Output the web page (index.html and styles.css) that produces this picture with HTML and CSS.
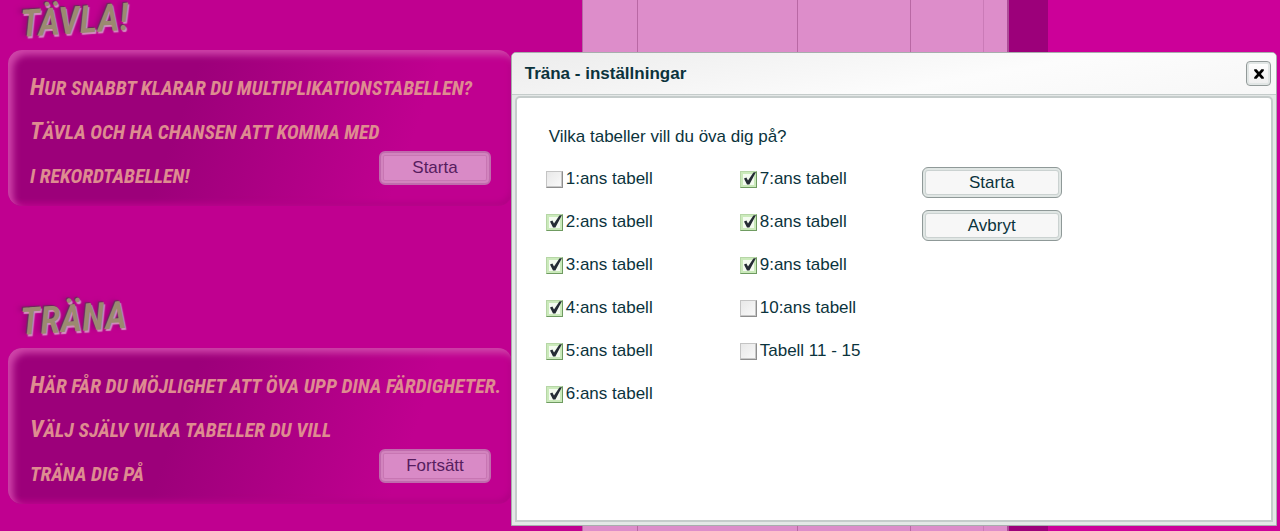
FILE: index.html
```
<!DOCTYPE html>
<html lang="sv">
<head>
    <meta charset="UTF-8">
    <meta name="viewport" content="width=device-width, initial-scale=1.0">
    <title>Träna - inställningar</title>
    <link rel="stylesheet" href="styles.css">
</head>
<body>
    <main class="game">
        <div class="menu">
            <section class="mode">
                <h2>TÄVLA!</h2>
                <div class="panel">
                    <p>Hur snabbt klarar du multiplikationstabellen?</p>
                    <p>Tävla och ha chansen att komma med</p>
                    <p class="plain">i rekordtabellen!</p>
                    <button type="button" class="ghost">Starta</button>
                </div>
            </section>
            <section class="mode">
                <h2>TRÄNA</h2>
                <div class="panel">
                    <p>Här får du möjlighet att öva upp dina färdigheter.</p>
                    <p>Välj själv vilka tabeller du vill</p>
                    <p class="plain">träna dig på</p>
                    <button type="button" class="ghost">Fortsätt</button>
                </div>
            </section>
        </div>
        <div class="board">
            <div></div>
            <div></div>
            <div></div>
            <div></div>
            <div></div>
        </div>
        <div class="shade"></div>
    </main>

    <div class="dialog" role="dialog" aria-labelledby="dialogTitle">
        <div class="titlebar">
            <h1 id="dialogTitle">Träna - inställningar</h1>
            <button type="button" class="close" aria-label="Stäng">
                <svg width="12" height="12" viewBox="0 0 10 10"><path d="M1 1H3L5 3.4L7 1H9V2.2L6.6 5L9 7.8V9H7L5 6.6L3 9H1V7.8L3.4 5L1 2.2Z"/></svg>
            </button>
        </div>
        <form class="content">
            <p>Vilka tabeller vill du öva dig på?</p>
            <div class="columns">
                <div class="list">
                    <label><input type="checkbox">1:ans tabell</label>
                    <label><input type="checkbox" checked>2:ans tabell</label>
                    <label><input type="checkbox" checked>3:ans tabell</label>
                    <label><input type="checkbox" checked>4:ans tabell</label>
                    <label><input type="checkbox" checked>5:ans tabell</label>
                    <label><input type="checkbox" checked>6:ans tabell</label>
                </div>
                <div class="list">
                    <label><input type="checkbox" checked>7:ans tabell</label>
                    <label><input type="checkbox" checked>8:ans tabell</label>
                    <label><input type="checkbox" checked>9:ans tabell</label>
                    <label><input type="checkbox">10:ans tabell</label>
                    <label><input type="checkbox">Tabell 11 - 15</label>
                </div>
                <div class="actions">
                    <button type="button">Starta</button>
                    <button type="button">Avbryt</button>
                </div>
            </div>
        </form>
    </div>
</body>
</html>
```
FILE: styles.css
```
* { box-sizing: border-box; }
body { margin: 0; background: #cc0099; font-family: "Liberation Sans", Arial, sans-serif; font-size: 17px; color: #0b333c; }
h1, h2, p { margin: 0; }
button { font: inherit; color: inherit; padding: 0; cursor: pointer; }

.game { display: grid; grid-template-columns: 45.5% 33.3% 3.1% 1fr; min-height: 100vh; }

/* left menu */
.menu { display: flex; flex-direction: column; gap: 92px; background: #c00090; padding-left: 8px; }
.mode h2 { height: 50px; padding-left: 14px; font-family: "Roboto Condensed", Roboto, sans-serif; font-size: 38px; line-height: 50px; font-style: italic; font-weight: 600; color: #9b8a70; text-shadow: 1px 2px 1px #d48fc0, -1px -1px 1px #6b2a58, -4px -1px 5px #a0007c; transform: rotate(-4deg); transform-origin: left bottom; }
.panel { position: relative; width: 504px; height: 156px; padding: 16px 22px; border-radius: 14px; background: linear-gradient(110deg, #9c007a 35%, #c00090 78%); box-shadow: inset 5px 5px 7px #cf44a9, inset -2px -4px 5px #b30087; }
.panel p { font-family: "Roboto Condensed", Roboto, sans-serif; font-size: 20px; line-height: 44px; font-weight: bold; font-style: italic; text-transform: uppercase; white-space: nowrap; color: #de8c90; }
.panel p::first-letter { font-size: 24px; line-height: 20px; }
.panel .plain::first-letter { font-size: 20px; }
.ghost { position: absolute; right: 21px; bottom: 21px; width: 112px; height: 34px; border: 2px solid #c06bad; border-radius: 6px; background: #d98ac6; box-shadow: inset 0 0 0 2px #d284be, inset 0 0 0 3px #c876b3; color: #571d5f; }

/* score board behind the dialog */
.board { display: grid; grid-template-columns: 55fr 161fr 113fr 73fr 23fr; background: #dd8dca; border-left: 1px solid #b668a4; border-right: 2px solid #ad4c98; }
.board div { border-right: 1px solid #b968a4; }
.board div:nth-child(4) { border-color: #ca7bb7; }
.board div:last-child { border: 0; }
.shade { background: #9c007a; }

/* dialog */
.dialog { position: absolute; top: 52px; right: 3px; bottom: 5px; left: 39.9%; display: flex; flex-direction: column; border: 1px solid #a7aead; border-radius: 5px 5px 0 0; background: #e4e8e7; padding-bottom: 3px; }
.titlebar { display: flex; align-items: center; justify-content: space-between; height: 42px; padding: 0 5px 0 13px; border-bottom: 1px solid #c5cccb; border-radius: 4px 4px 0 0; background: linear-gradient(170deg, #ececec, #fcfcfc 60%, #f7f7f7); }
.titlebar h1 { font-size: 17px; line-height: 20px; }
.close { display: flex; align-items: center; justify-content: center; width: 25px; height: 25px; border: 1px solid #929a99; border-radius: 4px; background: linear-gradient(#fff, #eee); box-shadow: inset 0 0 0 2px #e1e6e5; }
.content { flex: 1; margin: 1px 3px 0; padding: 29px 29px 0; border: 2px solid #c5cccb; border-radius: 5px 5px 0 0; background: #fff; }
.content p { padding-left: 3px; line-height: 20px; }
.columns { display: flex; margin-top: 20px; }
.list { display: flex; flex-direction: column; gap: 19px; width: 194px; }
.list + .list { width: 182px; }
.list label { display: flex; align-items: center; gap: 3px; height: 24px; }
.list input { appearance: none; width: 17px; height: 17px; margin: 0; border: 1px solid; border-color: #c4c4c4 #8e8e8e #8e8e8e #c4c4c4; background: linear-gradient(135deg, #e8e8e8, #fafafa); box-shadow: inset -1px -1px 0 #c8c8c8; }
.list input:checked { border-color: #b6d6a6 #6f9b61 #6f9b61 #b6d6a6; background: #f4fbf0 url("data:image/svg+xml,%3Csvg xmlns='http://www.w3.org/2000/svg' viewBox='0 0 15 15'%3E%3Cpath d='M1 1H14V14H1Z' fill='none' stroke='%23cbeabb' stroke-width='2'/%3E%3Cpath d='M3 6.4L5.4 5.6L7 8.6L12.4 0.4L15 0L8.4 12.4H6Z' fill='%23252c35'/%3E%3C/svg%3E") center / 15px 15px no-repeat; box-shadow: none; }
.actions { display: flex; flex-direction: column; gap: 12px; }
.actions button { width: 140px; height: 31px; border: 1px solid #8f9998; border-radius: 6px; background: #f7f7f7; box-shadow: inset 0 0 0 2px #e0e6e4, inset 0 0 0 3px #cbd2d1; }
```
